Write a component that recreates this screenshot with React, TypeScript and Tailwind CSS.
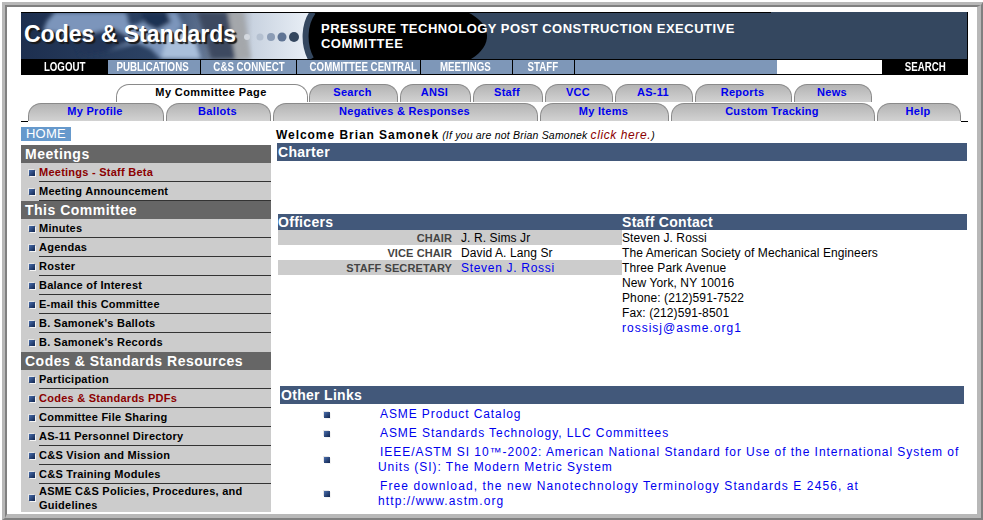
const sans = "font-['Liberation_Sans',Arial,sans-serif]";

function BannerArt() {
  return (
    <svg className="absolute inset-0" width="947" height="47" viewBox="0 0 947 47">
      <defs>
        <linearGradient id="lg" x1="0" x2="1" y1="0" y2="0">
          <stop offset="0" stopColor="#1d2f4f" />
          <stop offset="0.45" stopColor="#2c4263" />
          <stop offset="0.62" stopColor="#5b6f8e" />
          <stop offset="0.72" stopColor="#8a8f98" />
          <stop offset="0.8" stopColor="#c9d3e0" />
          <stop offset="1" stopColor="#eaf0f7" />
        </linearGradient>
        <filter id="bl"><feGaussianBlur stdDeviation="2" /></filter>
        <clipPath id="cp"><rect width="284" height="47" /></clipPath>
      </defs>
      <rect width="947" height="47" fill="#34475f" />
      <rect width="290" height="47" fill="url(#lg)" />
      <g clipPath="url(#cp)" filter="url(#bl)">
        <path d="M34 0h70c6 6 0 12 8 14 10-3 16-8 22-14h22l6 14-10 10 22 8 6 15h-40l-10-10-14-6-30 8-18-2-16-14-30-4 4-10z" fill="#7b95bb" />
        <path d="M120 0h26l4 10-14 8-12-6z" fill="#1f3352" />
        <path d="M52 26l40-10 22 12-30 12-24 4z" fill="#223657" />
        <path d="M146 22l26-2 8 27h-40z" fill="#a9bfdb" />
        <path d="M176 0h30l8 47h-24l-8-28z" fill="#3c4a60" />
        <path d="M208 0h14l8 47h-14z" fill="#a4a7ab" />
      </g>
      <path d="M292 0C283 12 282 32 290 47H450C472 34 472 12 446 0Z" fill="#000" />
      <path d="M292 0C283 12 282 32 290 47" fill="none" stroke="#34475f" strokeWidth="6" />
      <rect x="0" y="0" width="750" height="1" fill="#000" />
      <circle cx="226" cy="25" r="3" fill="#d3d8df" />
      <circle cx="239" cy="25" r="3.5" fill="#b4c0d0" />
      <circle cx="250" cy="25" r="4" fill="#8b9cb5" />
      <circle cx="261" cy="25" r="4.5" fill="#5f7494" />
      <circle cx="273" cy="25" r="5" fill="#34475f" />
      <rect x="946" width="1" height="47" fill="#000" />
    </svg>
  );
}

const navItems = [
  { t: "PUBLICATIONS", c: "w-[93px] pr-[2px]" },
  { t: "C&S CONNECT", c: "w-[96px] pl-[2px]" },
  { t: "COMMITTEE CENTRAL", c: "w-[124px] pr-[8px]" },
  { t: "MEETINGS", c: "w-[92px] pr-[3px]" },
  { t: "STAFF", c: "w-[62px] pr-[2px]" },
];

function NavLabel({ t }: { t: string }) {
  return <span className="inline-block scale-x-[.81] whitespace-nowrap">{t}</span>;
}

function Tab({ t, w, active }: { t: string; w: string; active?: boolean }) {
  return (
    <div
      className={`${w} h-[18px] shrink-0 rounded-t-[13px] border border-b-0 border-[#8a8a8a] pr-[2px] text-center text-[11px] leading-[15px] font-bold ${
        active ? "bg-white tracking-[0.4px] text-black" : "bg-gradient-to-b from-[#b4b4b4] to-[#d2d2d2] tracking-[0.3px] text-[#0000ee]"
      }`}
    >
      {t}
    </div>
  );
}

const row1 = [
  { t: "Search", w: "w-[89px]" },
  { t: "ANSI", w: "w-[71px]" },
  { t: "Staff", w: "w-[70px]" },
  { t: "VCC", w: "w-[68px]" },
  { t: "AS-11", w: "w-[78px]" },
  { t: "Reports", w: "w-[97px]" },
  { t: "News", w: "w-[78px]" },
];
const row2 = [
  { t: "My Profile", w: "w-[136px]" },
  { t: "Ballots", w: "w-[105px]" },
  { t: "Negatives & Responses", w: "w-[265px]" },
  { t: "My Items", w: "w-[129px]" },
  { t: "Custom Tracking", w: "w-[204px]" },
  { t: "Help", w: "w-[84px]" },
];

function Bullet() {
  return (
    <span className="block h-[6px] w-[6px] shrink-0 bg-gradient-to-br from-[#4a6fae] to-[#12264f] shadow-[1px_1px_0_#f4f4f4,-1px_-1px_0_#e6e6e6]" />
  );
}

function SideHead({ t }: { t: string }) {
  return (
    <div className="h-[18px] bg-[#666666] pl-1 text-[14px] leading-[18px] font-bold tracking-[0.5px] text-white">{t}</div>
  );
}

function SideItem({ t, red, last, tall }: { t: string; red?: boolean; last?: boolean; tall?: boolean }) {
  return (
    <div className={`flex ${tall ? "h-[28px]" : "h-[19px]"} items-center bg-[#cccccc] pl-[8px]`}>
      <Bullet />
      <div
        className={`ml-[4px] flex h-full flex-1 items-center border-[#333333] pb-[1px] text-[11px] leading-[14px] font-bold tracking-[0.25px] ${
          last ? "" : "border-b"
        } ${red ? "text-[#8b0000]" : "text-black"}`}
      >
        <span>{t}</span>
      </div>
    </div>
  );
}

function Bar({ t, className }: { t: string; className: string }) {
  return <div className={`${className} bg-[#42587a] text-[14px] font-bold tracking-[0.3px] text-white`}>{t}</div>;
}

const contact = [
  "Steven J. Rossi",
  "The American Society of Mechanical Engineers",
  "Three Park Avenue",
  "New York, NY 10016",
  "Phone: (212)591-7522",
  "Fax: (212)591-8501",
];

const links = [
  { a: "ASME Product Catalog", h: "h-[19px]", s: "tracking-[0.9px]" },
  { a: "ASME Standards Technology, LLC Committees", h: "h-[19px]", s: "tracking-[0.93px]" },
  { a: "IEEE/ASTM SI 10™-2002: American National Standard for Use of the International System of Units (SI): The Modern Metric System", h: "h-[34px]", s: "tracking-[0.95px]" },
  { a: "Free download, the new Nanotechnology Terminology Standards E 2456, at http://www.astm.org", h: "h-[34px]", s: "tracking-[1.1px]" },
];

const labelCls = "w-[174px] text-right text-[11px] font-bold tracking-[0.1px] text-[#444444]";

export default function App() {
  return (
    <div className={`${sans} h-[520px] w-[983px] overflow-hidden bg-white pt-[2px] pl-[2px]`}>
      <div className="h-[518px] w-[981px] border-t-[3px] border-r-2 border-b-2 border-l-[3px] border-t-[#b8b8b8] border-r-[#808080] border-b-[#808080] border-l-[#b8b8b8]">
        <div className="h-[513px] w-[976px] border-t-2 border-r-4 border-b-4 border-l-2 border-t-[#808080] border-r-[#b8b8b8] border-b-[#b8b8b8] border-l-[#808080]">
          <div className="h-[507px] w-[970px] overflow-hidden bg-white pt-[5px] pl-[14px]">
            {/* Banner */}
            <div className="w-[947px]">
              <div className="relative h-[47px] overflow-hidden">
                <BannerArt />
                <div className="absolute top-[7px] left-[3px] text-[23px] leading-[30px] font-bold text-white [text-shadow:2px_2px_1px_#1a1a1a]">
                  Codes &amp; Standards
                </div>
                <div className="absolute top-[9px] left-[300px] w-[460px] text-[13px] leading-[15px] font-bold tracking-[0.48px] text-white">
                  PRESSURE TECHNOLOGY POST CONSTRUCTION EXECUTIVE COMMITTEE
                </div>
              </div>
              <div className="flex h-[16px] border-y border-black bg-[#7e97b8] text-[12px] leading-[14px] font-bold text-white">
                <div className="w-[87px] bg-black text-center">
                  <NavLabel t="LOGOUT" />
                </div>
                {navItems.map((n) => (
                  <div key={n.t} className={`${n.c} border-r border-black text-center`}>
                    <NavLabel t={n.t} />
                  </div>
                ))}
                <div className="flex-1" />
                <div className="w-[105px] bg-white" />
                <div className="w-[86px] bg-black text-center">
                  <NavLabel t="SEARCH" />
                </div>
              </div>
            </div>

            {/* Tabs */}
            <div className="mt-[9px] flex pl-[95px]">
              <div className="mr-[1px]">
                <Tab t="My Committee Page" w="w-[192px]" active />
              </div>
              <div className="flex gap-[2px]">
                {row1.map((r) => (
                  <Tab key={r.t} t={r.t} w={r.w} />
                ))}
              </div>
            </div>
            <div className="mt-[1px] flex h-[19px] w-[947px] items-start">
              <div className="mt-[18px] h-px w-[7px] bg-black" />
              <div className="flex gap-[2px]">
                {row2.map((r) => (
                  <Tab key={r.t} t={r.t} w={r.w} />
                ))}
              </div>
              <div className="mt-[18px] h-px w-[7px] bg-black" />
            </div>

            {/* Body */}
            <div className="mt-[5px] flex w-[947px]">
              <div className="w-[250px] shrink-0">
                <div className="h-[14px] w-[50px] bg-[#6699cc] pl-[5px] text-[13px] leading-[14px] tracking-[0.2px] text-white">HOME</div>
                <div className="mt-[4px]">
                  <SideHead t="Meetings" />
                  <SideItem t="Meetings - Staff Beta" red />
                  <SideItem t="Meeting Announcement" />
                  <SideHead t="This Committee" />
                  <SideItem t="Minutes" />
                  <SideItem t="Agendas" />
                  <SideItem t="Roster" />
                  <SideItem t="Balance of Interest" />
                  <SideItem t="E-mail this Committee" />
                  <SideItem t="B. Samonek's Ballots" />
                  <SideItem t="B. Samonek's Records" last />
                  <SideHead t="Codes & Standards Resources" />
                  <SideItem t="Participation" />
                  <SideItem t="Codes & Standards PDFs" red />
                  <SideItem t="Committee File Sharing" />
                  <SideItem t="AS-11 Personnel Directory" />
                  <SideItem t="C&S Vision and Mission" />
                  <SideItem t="C&S Training Modules" />
                  <SideItem t="ASME C&S Policies, Procedures, and Guidelines" last tall />
                </div>
              </div>

              <div className="mt-[1px] ml-[5px] w-[692px]">
                <div className="h-[15px] whitespace-nowrap text-[12px] leading-[15px] text-black">
                  <span className="font-bold tracking-[0.95px]">Welcome Brian Samonek</span>
                  <span className="ml-[3px] text-[10.5px] italic tracking-[0.2px]">
                    (If you are not Brian Samonek <span className="text-[12px] tracking-[0.6px] text-[#8b0000]">click here.</span>)
                  </span>
                </div>
                <Bar t="Charter" className="ml-px h-[18px] w-[690px] pl-px leading-[18px]" />
                <div className="mt-[53px] ml-[2px] grid w-[689px] grid-cols-[344px_345px] text-[12px] leading-[17px] tracking-[0.1px] text-black">
                  <div>
                    <Bar t="Officers" className="h-[16px] leading-[16px]" />
                    <div className="flex h-[15px] bg-[#cccccc]">
                      <div className={labelCls}>CHAIR</div>
                      <div className="ml-[9px]">J. R. Sims Jr</div>
                    </div>
                    <div className="flex h-[15px]">
                      <div className={labelCls}>VICE CHAIR</div>
                      <div className="ml-[9px]">David A. Lang Sr</div>
                    </div>
                    <div className="flex h-[15px] bg-[#cccccc]">
                      <div className={labelCls}>STAFF SECRETARY</div>
                      <div className="ml-[9px] tracking-[0.7px] text-[#0000ee]">Steven J. Rossi</div>
                    </div>
                  </div>
                  <div>
                    <Bar t="Staff Contact" className="h-[16px] leading-[16px]" />
                    {contact.map((c) => (
                      <div key={c} className="h-[15px] whitespace-nowrap">{c}</div>
                    ))}
                    <div className="h-[15px] tracking-[1px] text-[#0000ee]">rossisj@asme.org1</div>
                  </div>
                </div>
                <Bar t="Other Links" className="mt-[51px] ml-[4px] h-[18px] w-[684px] pl-px leading-[18px]" />
                <div className="mt-[1px] ml-[4px] w-[684px] text-[12px] leading-[15px] text-[#0000ee]">
                  {links.map((l) => (
                    <div key={l.a} className={`flex ${l.h} items-center ${l.s}`}>
                      <div className="w-[98px] shrink-0 pl-[44px]">
                        <Bullet />
                      </div>
                      <div className="indent-[2px]">{l.a}</div>
                    </div>
                  ))}
                </div>
              </div>
            </div>
          </div>
        </div>
      </div>
    </div>
  );
}
